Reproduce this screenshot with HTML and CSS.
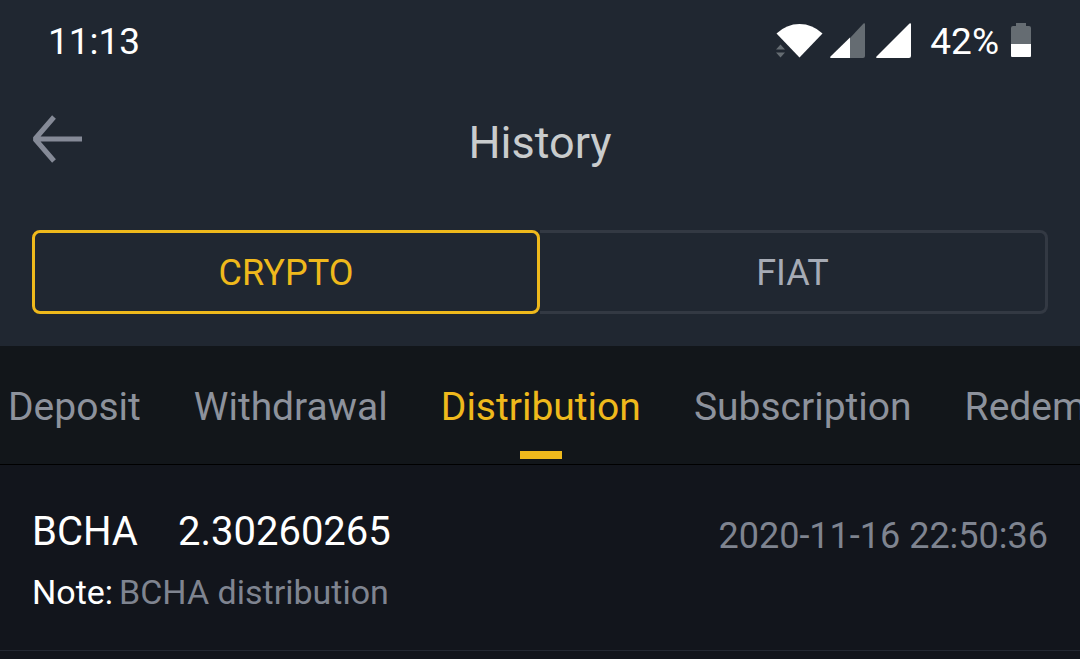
FILE: index.html
```html
<!DOCTYPE html>
<html lang="en">
<head>
	<meta charset="UTF-8">
	<meta name="viewport" content="width=device-width, initial-scale=1">
	<title>History</title>
	<link rel="stylesheet" href="styles.css">
</head>
<body>
	<header class="top">
		<div class="status">
			<span class="time">11:13</span>
			<div class="status-icons">
				<svg class="wifi" width="48" height="36" viewBox="0 0 48 36">
					<path fill="#fff" d="M0.5 10.500Q10.500 1 23.500 1T46.500 10.500L23.500 34.500z"/>
					<path fill="#656c72" d="M0 26.500l4.500-5 4.500 5zM0 29.500h9l-4.500 5z"/>
				</svg>
				<svg class="signal" width="36" height="36" viewBox="0 0 36 36">
					<path fill="#656c72" d="M35 1.500V33q0 2-2 2H20V15L33.500 0.500Q35-.5 35 1.500z"/>
					<path fill="#fff" d="M20 14.500V35H1q-1.500-.5-.5-1.500z"/>
				</svg>
				<svg class="signal" width="36" height="36" viewBox="0 0 36 36">
					<path fill="#fff" d="M35 1.500V33q0 2-2 2H1q-1.500-.5-.5-1.500L33.500 0.500Q35-.5 35 1.500z"/>
				</svg>
				<span class="percent">42%</span>
				<svg class="battery" width="21" height="36" viewBox="0 0 21 36">
					<path fill="#656c72" d="M5 0h10v3h3q2 0 2 2v16H0V5q0-2 2-2h3z"/>
					<path fill="#fff" d="M0 21h20v12q0 1-1 1H1q-1 0-1-1z"/>
				</svg>
			</div>
		</div>
		<div class="title-bar">
			<button class="back" type="button" aria-label="Back">
				<svg width="50" height="48" viewBox="0 0 50 48">
					<path fill="none" stroke="#858a97" stroke-width="5" stroke-linejoin="bevel" d="M22 2L3 24l19 22M3 24h47"/>
				</svg>
			</button>
			<h1>History</h1>
		</div>
		<div class="switch">
			<button class="selected" type="button">CRYPTO</button>
			<button type="button">FIAT</button>
		</div>
	</header>
	<nav class="tabs">
		<a href="#deposit">Deposit</a>
		<a href="#withdrawal">Withdrawal</a>
		<a href="#distribution" class="selected">Distribution</a>
		<a href="#subscription">Subscription</a>
		<a href="#redemption">Redemption</a>
	</nav>
	<main>
		<ul class="list">
			<li>
				<div class="row">
					<div class="amount"><span>BCHA</span><span>2.30260265</span></div>
					<time datetime="2020-11-16T22:50:36">2020-11-16 22:50:36</time>
				</div>
				<p class="note"><span>Note:</span><span class="note-text">BCHA distribution</span></p>
			</li>
		</ul>
	</main>
</body>
</html>
```
FILE: styles.css
```css
*{
	margin: 0;
	padding: 0;
	box-sizing: border-box;
}
body{
	background: #12151c;
	color: #fff;
	font-family: Roboto, "Liberation Sans", sans-serif;
	overflow-x: hidden;
}
ul{
	list-style: none;
}
svg{
	display: block;
}
button{
	background: none;
	border: none;
	font: inherit;
	cursor: pointer;
}
.top{
	background: #202731;
	padding: 0 32px 32px;
}
/* status bar */
.status{
	display: flex;
	justify-content: space-between;
	align-items: center;
	height: 82px;
	padding: 0 16px;
	font-size: 37px;
}
.status-icons{
	display: flex;
	align-items: center;
}
.wifi{
	margin-right: 6px;
}
.signal{
	margin-right: 10px;
}
.percent{
	margin: 0 12px 0 8px;
}
/* title */
.title-bar{
	display: grid;
	grid-template-columns: 50px 1fr 50px;
	align-items: center;
	height: 114px;
}
.title-bar h1{
	font-size: 45px;
	font-weight: 400;
	line-height: 60px;
	padding-top: 8px;
	text-align: center;
	color: #c9cccd;
}
/* CRYPTO / FIAT */
.switch{
	display: flex;
	height: 84px;
	margin-top: 34px;
}
.switch button{
	width: 50%;
	padding-top: 2px;
	border: 3px solid #333943;
	border-left: none;
	border-radius: 0 8px 8px 0;
	font-size: 36px;
	color: #a6abb5;
}
.switch .selected{
	border: 3px solid #efb91c;
	border-radius: 8px;
	color: #efb91c;
}
/* tabs */
.tabs{
	display: flex;
	gap: 53px;
	height: 119px;
	padding-left: 8px;
	background: #12161a;
	border-bottom: 1px solid #000;
	overflow: hidden;
}
.tabs a{
	position: relative;
	flex: none;
	font-size: 39px;
	line-height: 122px;
	color: #8d929c;
	text-decoration: none;
}
.tabs .selected{
	color: #efb91c;
}
.tabs .selected::after{
	content: "";
	position: absolute;
	left: 50%;
	bottom: 5px;
	width: 42px;
	height: 8px;
	margin-left: -21px;
	background: #efb91c;
}
/* records */
.list li{
	padding: 36px 32px 32px;
	border-bottom: 1px solid #232832;
}
.row{
	display: flex;
	justify-content: space-between;
	align-items: center;
}
.amount{
	display: flex;
	gap: 40px;
	font-size: 40px;
	line-height: 62px;
}
.row time{
	padding-top: 8px;
	font-size: 36px;
	color: #7f8490;
}
.note{
	display: flex;
	gap: 6px;
	margin-top: 3px;
	font-size: 34px;
	line-height: 52px;
}
.note-text{
	color: #7f8490;
}
```
